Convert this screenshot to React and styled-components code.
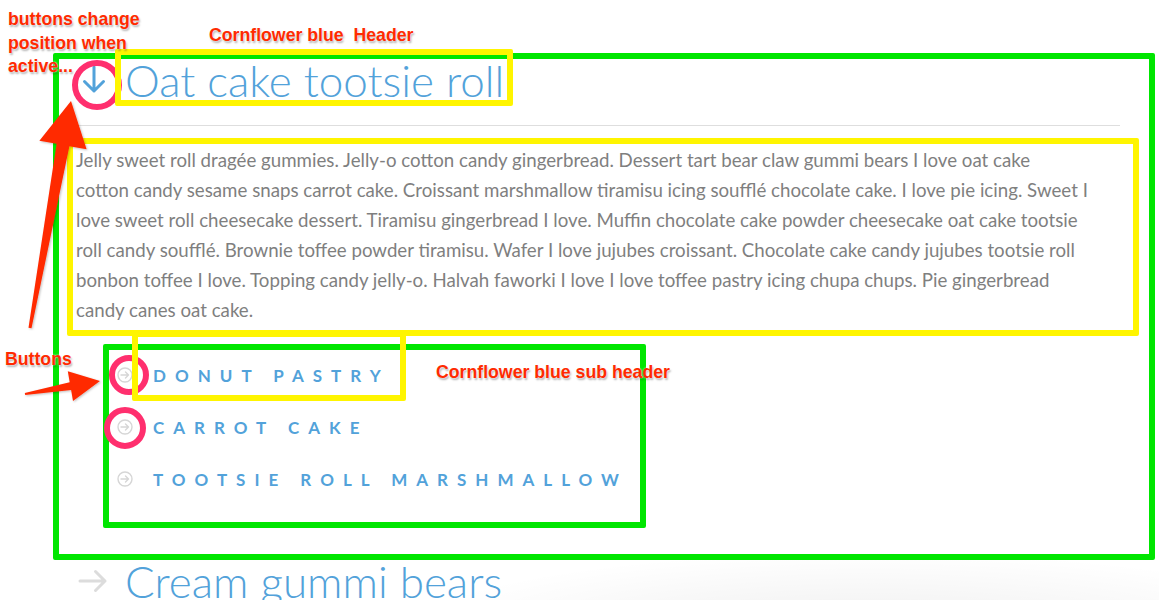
import React from "react";
import styled, { createGlobalStyle } from "styled-components";

const GlobalStyle = createGlobalStyle`
  html, body {
    margin: 0;
    padding: 0;
    background: #fff;
    overflow: hidden;
  }
`;

const Page = styled.div`
  position: relative;
  width: 1159px;
  height: 600px;
  overflow: hidden;
  padding: 52px 0 0 76px;
  box-sizing: border-box;
  font-family: Lato, "Open Sans", sans-serif;

  &::after {
    content: "";
    position: absolute;
    left: 380px;
    right: -200px;
    bottom: -40px;
    height: 90px;
    background: radial-gradient(ellipse at 50% 100%, rgba(0, 0, 0, 0.07) 0%, rgba(0, 0, 0, 0) 70%);
    pointer-events: none;
  }
`;

const Accordion = styled.div`
  width: 1044px;
`;

const ItemHeader = styled.div`
  display: flex;
  align-items: center;
  height: 56px;
`;

const IconSlot = styled.div`
  width: 49px;
  flex: none;
  display: flex;
  align-items: center;
  padding-left: ${(p) => p.$pad}px;
  box-sizing: border-box;
`;

const Title = styled.h2`
  margin: 0;
  font-family: Lato, sans-serif;
  font-weight: 300;
  font-size: 44px;
  line-height: 56px;
  color: #52a2da;
  white-space: nowrap;
`;

const Rule = styled.hr`
  margin: 17px 0 0;
  border: 0;
  border-top: 1px solid #dedede;
`;

const Body = styled.p`
  margin: 19px 0 0;
  width: 1060px;
  font-size: 18.7px;
  line-height: 30px;
  color: #7f7f7f;
`;

const Line = styled.span`
  display: block;
  white-space: nowrap;
`;

const SubList = styled.ul`
  list-style: none;
  margin: 24px 0 48px;
  padding: 0 0 0 41px;
`;

const SubItem = styled.li`
  display: flex;
  align-items: center;
  gap: 20px;
  height: 52px;
`;

const SubTitle = styled.span`
  font-family: Lato, sans-serif;
  font-weight: 700;
  font-size: 17px;
  letter-spacing: 0.53em;
  text-transform: uppercase;
  color: #52a2da;
`;

/* ---- annotation layer ---- */

const Frame = styled.div`
  position: absolute;
  left: ${(p) => p.$x}px;
  top: ${(p) => p.$y}px;
  width: ${(p) => p.$w}px;
  height: ${(p) => p.$h}px;
  border: 6px solid ${(p) => (p.$tone === "green" ? "#00e600" : "#fff500")};
  border-radius: 2px;
  box-sizing: border-box;
  z-index: ${(p) => (p.$tone === "green" ? 1 : 3)};
  pointer-events: none;
`;

const Note = styled.div`
  position: absolute;
  left: ${(p) => p.$x}px;
  top: ${(p) => p.$y}px;
  z-index: 5;
  font-family: "Liberation Sans", Arial, sans-serif;
  font-weight: 700;
  font-size: 17.7px;
  line-height: 23.5px;
  color: #ff2a00;
  white-space: pre;
  text-shadow: 0 0 2px #fff, 1px 2px 2px rgba(0, 0, 0, 0.3);
`;

const Layer = styled.svg`
  position: absolute;
  left: 0;
  top: 0;
  z-index: ${(p) => p.$z};
  pointer-events: none;
`;

const DownArrow = () => (
  <svg width="24" height="30" viewBox="0 0 24 30">
    <path d="M12 2 V26 M2.5 16.5 L12 26 L21.5 16.5" fill="none" stroke="#52a2da" strokeWidth="3" strokeLinecap="round" strokeLinejoin="round" />
  </svg>
);

const RightArrow = () => (
  <svg width="30" height="24" viewBox="0 0 30 24">
    <path d="M2 12 H27 M17.5 2.5 L27 12 L17.5 21.5" fill="none" stroke="#dcdcdc" strokeWidth="3" strokeLinecap="round" strokeLinejoin="round" />
  </svg>
);

const CircleArrow = () => (
  <svg width="16" height="16" viewBox="0 0 16 16">
    <circle cx="8" cy="8" r="7" fill="none" stroke="#d6d6d6" strokeWidth="1.4" />
    <path d="M4 8 H11.5 M8.5 5 L11.5 8 L8.5 11" fill="none" stroke="#d6d6d6" strokeWidth="1.4" strokeLinecap="round" strokeLinejoin="round" />
  </svg>
);

const bodyLines = [
  "Jelly sweet roll dragée gummies. Jelly-o cotton candy gingerbread. Dessert tart bear claw gummi bears I love oat cake",
  "cotton candy sesame snaps carrot cake. Croissant marshmallow tiramisu icing soufflé chocolate cake. I love pie icing. Sweet I",
  "love sweet roll cheesecake dessert. Tiramisu gingerbread I love. Muffin chocolate cake powder cheesecake oat cake tootsie",
  "roll candy soufflé. Brownie toffee powder tiramisu. Wafer I love jujubes croissant. Chocolate cake candy jujubes tootsie roll",
  "bonbon toffee I love. Topping candy jelly-o. Halvah faworki I love I love toffee pastry icing chupa chups. Pie gingerbread",
  "candy canes oat cake.",
];

const subItems = ["Donut pastry", "Carrot cake", "Tootsie roll marshmallow"];

export default function App() {
  return (
    <Page>
      <GlobalStyle />
      <Accordion>
        <ItemHeader>
          <IconSlot $pad={6}>
            <DownArrow />
          </IconSlot>
          <Title>Oat cake tootsie roll</Title>
        </ItemHeader>
        <Rule />
        <Body>
          {bodyLines.map((l, i) => (
            <Line key={i}>{l}</Line>
          ))}
        </Body>
        <SubList>
          {subItems.map((s) => (
            <SubItem key={s}>
              <CircleArrow />
              <SubTitle>{s}</SubTitle>
            </SubItem>
          ))}
        </SubList>
        <ItemHeader>
          <IconSlot $pad={2}>
            <RightArrow />
          </IconSlot>
          <Title>Cream gummi bears</Title>
        </ItemHeader>
      </Accordion>

      {/* annotations */}
      <Frame $tone="green" $x={53} $y={53} $w={1102} $h={507} />
      <Frame $tone="green" $x={103} $y={344} $w={543} $h={184} />

      <Layer $z={2} width="1159" height="600">
        <circle cx="97" cy="85" r="22" fill="none" stroke="#ff2f6e" strokeWidth="6" />
        <circle cx="129" cy="375" r="17" fill="none" stroke="#ff2f6e" strokeWidth="6" />
        <circle cx="125" cy="428" r="18" fill="none" stroke="#ff2f6e" strokeWidth="6" />
      </Layer>

      <Frame $tone="yellow" $x={115} $y={49} $w={398} $h={57} />
      <Frame $tone="yellow" $x={67} $y={138} $w={1072} $h={198} />
      <Frame $tone="yellow" $x={132} $y={331} $w={274} $h={70} />

      <Layer $z={4} width="1159" height="600">
        <defs>
          <filter id="sh" x="-20%" y="-20%" width="140%" height="140%">
            <feDropShadow dx="1" dy="1" stdDeviation="1" floodColor="#000" floodOpacity="0.25" />
          </filter>
        </defs>
        <polygon
          filter="url(#sh)"
          fill="#ff2a00"
          points="71,101 86.6,149.3 69.4,146.2 31.5,328.3 28.5,327.7 56.6,143.8 39.4,140.7"
        />
        <polygon
          filter="url(#sh)"
          fill="#ff2a00"
          points="100,381 73,400.9 71.1,390 25.2,395 24.8,393 69.7,382.2 67.8,371.3"
        />
      </Layer>

      <Note $x={8} $y={8}>{"buttons change\nposition when\nactive..."}</Note>
      <Note $x={209} $y={24}>{"Cornflower blue  Header"}</Note>
      <Note $x={5} $y={348}>{"Buttons"}</Note>
      <Note $x={436} $y={361}>{"Cornflower blue sub header"}</Note>
    </Page>
  );
}
